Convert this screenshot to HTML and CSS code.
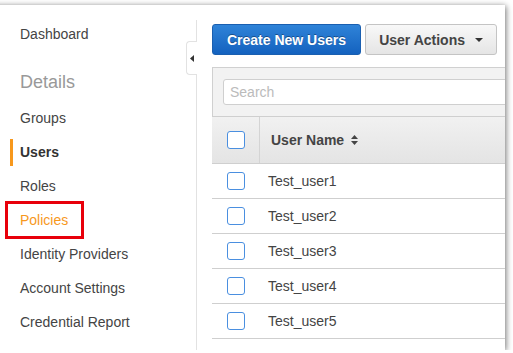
FILE: index.html
```html
<!DOCTYPE html>
<html lang="en">
<head>
  <meta charset="UTF-8" />
  <meta name="viewport" content="width=device-width, initial-scale=1.0"/>
  <title>IAM Users</title>
  <link rel="stylesheet" href="styles.css">
</head>
<body>
  <div class="frame">
    <div class="sidebar">
      <div class="nav-top">Dashboard</div>
      <div class="nav-heading">Details</div>
      <div class="nav-item"><span class="nav-label">Groups</span></div>
      <div class="nav-item active"><span class="nav-label">Users</span></div>
      <div class="nav-item"><span class="nav-label">Roles</span></div>
      <div class="nav-item highlight"><span class="nav-label">Policies</span></div>
      <div class="nav-item"><span class="nav-label">Identity Providers</span></div>
      <div class="nav-item"><span class="nav-label">Account Settings</span></div>
      <div class="nav-item"><span class="nav-label">Credential Report</span></div>

      <div class="collapse-tab">
        <svg width="4" height="7" viewBox="0 0 4 7"><path d="M4 0 L0 3.5 L4 7 Z" fill="#333"/></svg>
      </div>
    </div>

    <div class="main">
      <div class="actions">
        <button class="btn btn-primary">Create New Users</button>
        <button class="btn btn-default">User Actions <span class="caret"></span></button>
      </div>

      <div class="panel">
        <div class="search-bar">
          <div class="search-input">Search</div>
        </div>

        <div class="table">
          <div class="row head">
            <div class="cell-check"><span class="checkbox"></span></div>
            <div class="cell-name">User Name
              <svg class="sort" width="7" height="10" viewBox="0 0 7 10">
                <path d="M3.5 0 L7 4 L0 4 Z M0 6 L7 6 L3.5 10 Z" fill="#444"/>
              </svg>
            </div>
          </div>
          <div class="row">
            <div class="cell-check"><span class="checkbox"></span></div>
            <div class="cell-name">Test_user1</div>
          </div>
          <div class="row">
            <div class="cell-check"><span class="checkbox"></span></div>
            <div class="cell-name">Test_user2</div>
          </div>
          <div class="row">
            <div class="cell-check"><span class="checkbox"></span></div>
            <div class="cell-name">Test_user3</div>
          </div>
          <div class="row">
            <div class="cell-check"><span class="checkbox"></span></div>
            <div class="cell-name">Test_user4</div>
          </div>
          <div class="row">
            <div class="cell-check"><span class="checkbox"></span></div>
            <div class="cell-name">Test_user5</div>
          </div>
        </div>
      </div>
    </div>
  </div>
</body>
</html>
```

FILE: styles.css
```css
body {
  margin: 0;
  padding: 0;
  background: #fff;
  overflow: hidden;
  font-family: "Liberation Sans", Arial, sans-serif;
  font-size: 14px;
  color: #444;
}

.frame {
  display: flex;
  width: 515px;
  height: 345px;
  margin: 5px 0 0 -10px;
  background: #fff;
  box-shadow: 1px 1px 6px rgba(0, 0, 0, 0.55);
  overflow: hidden;
}

/* sidebar */
.sidebar {
  position: relative;
  width: 207px;
  flex-shrink: 0;
  margin-top: 15px;
  padding-left: 20px;
  border-right: 1px solid #e2e2e2;
  box-sizing: border-box;
}

.nav-top {
  height: 28px;
  line-height: 28px;
  padding-left: 10px;
}

.nav-heading {
  margin: 22px 0 7px;
  padding-left: 10px;
  font-size: 18px;
  line-height: 24px;
  color: #999;
}

.nav-item {
  display: flex;
  align-items: center;
  height: 34px;
}

.nav-label {
  display: inline-block;
  padding-left: 10px;
  line-height: 27px;
  white-space: nowrap;
}

.nav-item.active .nav-label {
  padding-left: 7px;
  border-left: 3px solid #f7981d;
  font-weight: bold;
  color: #333;
}

.nav-item.highlight .nav-label {
  margin-left: -5px;
  padding: 0 13px 0 12px;
  line-height: 32px;
  border: 3px solid #e8000b;
  color: #f7981d;
}

.collapse-tab {
  position: absolute;
  top: 21px;
  right: -1px;
  width: 10px;
  height: 32px;
  display: flex;
  align-items: center;
  justify-content: center;
  background: #fff;
  border: 1px solid #e2e2e2;
  border-right: none;
  border-radius: 4px 0 0 4px;
}

/* main */
.main {
  flex: 1;
  padding: 19px 0 0 15px;
  overflow: hidden;
}

.actions {
  display: flex;
  gap: 4px;
}

.btn {
  height: 31px;
  padding: 0;
  border-radius: 3px;
  font-family: "Liberation Sans", Arial, sans-serif;
  font-size: 14px;
  font-weight: bold;
}

.btn-primary {
  width: 149px;
  color: #fff;
  border: 1px solid #1a5fb0;
  background: linear-gradient(#2f83d8, #1462bf);
  text-shadow: 0 -1px 0 rgba(0, 0, 0, 0.35);
}

.btn-default {
  width: 132px;
  color: #444;
  border: 1px solid #c4c4c4;
  background: linear-gradient(#f8f8f8, #e5e5e5);
}

.caret {
  display: inline-block;
  margin-left: 6px;
  vertical-align: 3px;
  border-left: 4px solid transparent;
  border-right: 4px solid transparent;
  border-top: 4px solid #333;
}

.panel {
  width: 420px;
  margin-top: 12px;
}

.search-bar {
  padding: 11px 0 11px 10px;
  background: #f2f2f2;
  border: 1px solid #d0d0d0;
  border-bottom: none;
}

.search-input {
  height: 24px;
  line-height: 24px;
  padding-left: 6px;
  background: #fff;
  border: 1px solid #cfcfcf;
  border-radius: 3px;
  color: #bbb;
}

.row {
  display: flex;
  height: 34px;
  border-bottom: 1px solid #cfcfcf;
}

.row.head {
  height: 46px;
  border-top: 1px solid #cfcfcf;
  background: linear-gradient(#f1f1f1, #e4e4e4);
  font-weight: bold;
}

.cell-check {
  width: 47px;
  display: flex;
  align-items: center;
  justify-content: center;
}

.row.head .cell-check {
  border-right: 1px solid #d4d4d4;
}

.cell-name {
  display: flex;
  align-items: center;
  padding-left: 9px;
}

.row.head .cell-name {
  padding-left: 11px;
}

.sort {
  margin-left: 7px;
}

.checkbox {
  width: 16px;
  height: 16px;
  border: 1px solid #4a8fe0;
  border-radius: 3px;
  background: #fff;
}
```
